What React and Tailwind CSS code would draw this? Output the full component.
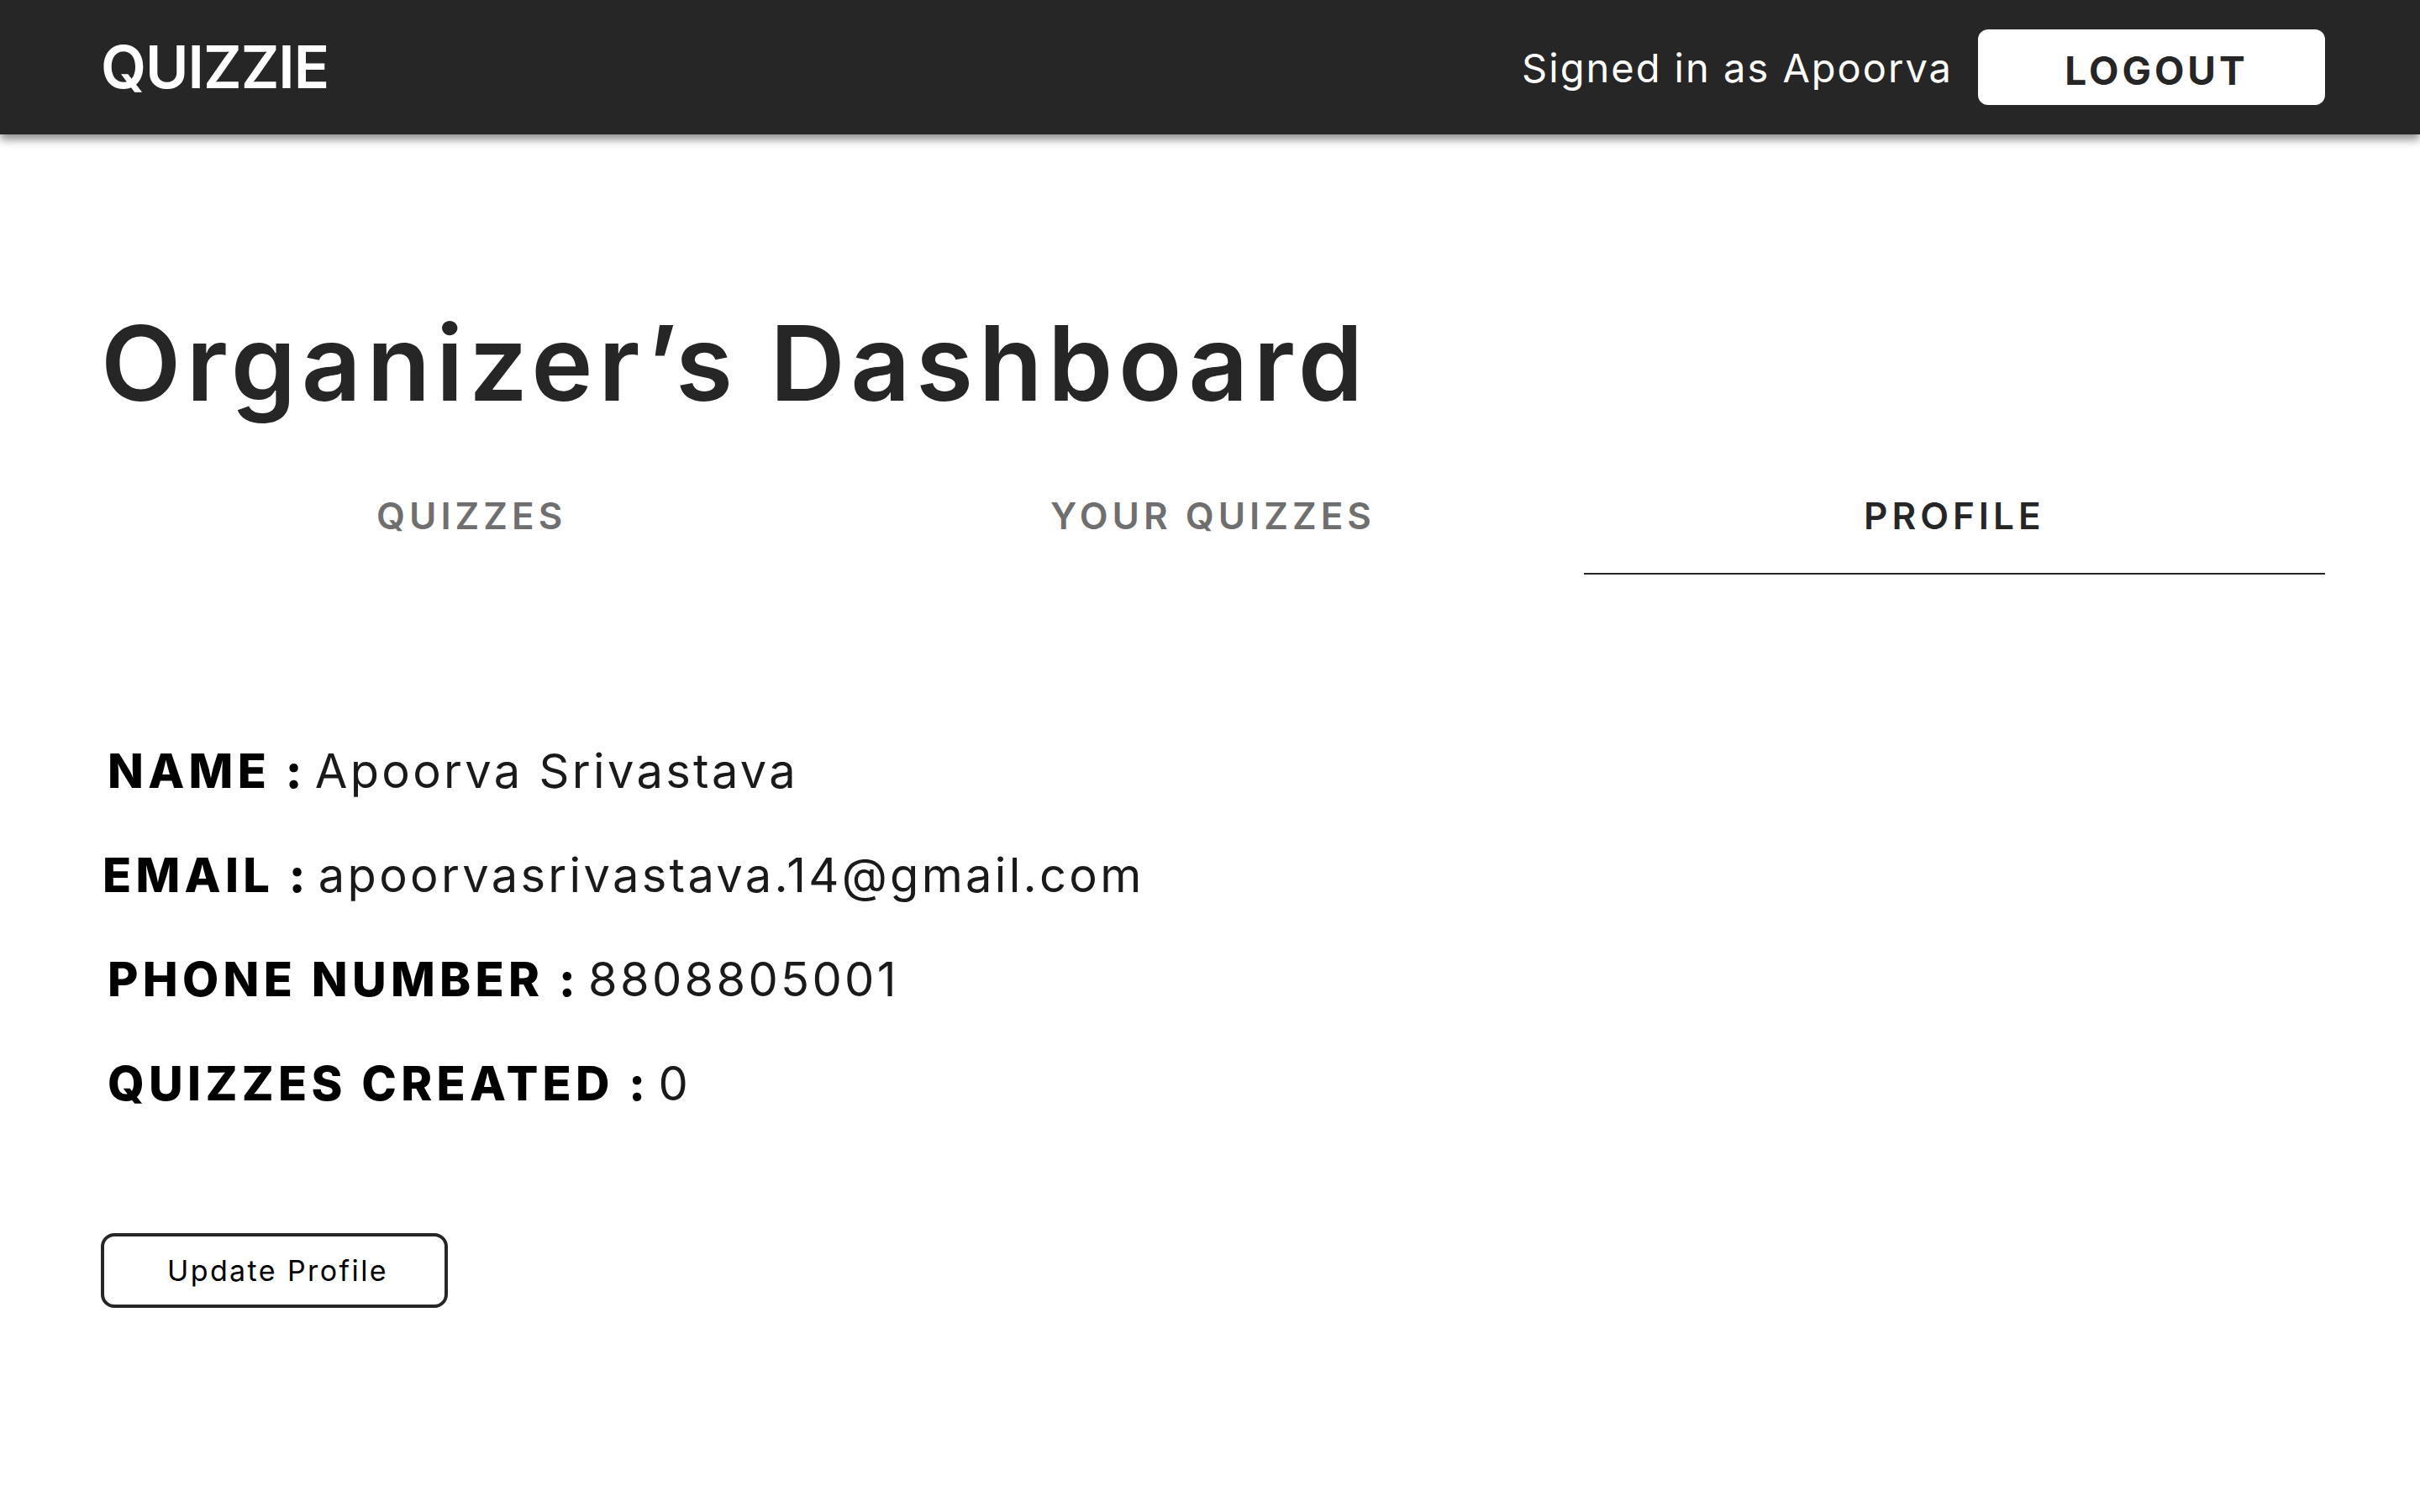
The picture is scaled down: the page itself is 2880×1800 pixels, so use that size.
import React from 'react';

const FONT = { fontFamily: 'Inter, "Open Sans", "DejaVu Sans", sans-serif' };

const tabs = [
    { id: 'quizzes', label: 'QUIZZES' },
    { id: 'yours', label: 'YOUR QUIZZES' },
    { id: 'profile', label: 'PROFILE' },
];

const fields = [
    { label: 'NAME :', value: 'Apoorva Srivastava', shift: '' },
    { label: 'EMAIL :', value: 'apoorvasrivastava.14@gmail.com', shift: '-ml-[6px]' },
    { label: 'PHONE NUMBER :', value: '8808805001', shift: '' },
    { label: 'QUIZZES CREATED :', value: '0', shift: '' },
];

function Header() {
    return (
        <header className="h-[160px] bg-[#262626] pl-[120px] pr-[113px] flex items-center justify-between shadow-[0_6px_10px_rgba(0,0,0,0.45)] relative z-10">
            <div className="text-white text-[70px] font-semibold leading-none tracking-[-1px]">QUIZZIE</div>
            <div className="flex items-center gap-[30px]">
                <span className="text-white text-[47px] leading-none tracking-[2px]">Signed in as Apoorva</span>
                <button className="w-[413px] h-[90px] pt-[8px] pl-[12px] rounded-[12px] bg-white text-[#262626] text-[46px] font-bold leading-none tracking-[4px]">
                    LOGOUT
                </button>
            </div>
        </header>
    );
}

export default function App() {
    const active = 'profile';

    return (
        <div className="min-h-screen bg-white text-[#262626]" style={FONT}>
            <Header />

            <main className="pl-[120px] pr-[113px]">
                {/* Title */}
                <h1 className="mt-[210px] text-[124px] font-semibold leading-none tracking-[6.5px]">
                    Organizer’s Dashboard
                </h1>

                {/* Tabs */}
                <div className="mt-[98px] flex">
                    {tabs.map(t => (
                        <div
                            key={t.id}
                            className={`flex-1 text-center text-[44px] font-semibold leading-none tracking-[5px] pb-[46px] border-b-2 ${t.id === active ? 'border-[#262626] text-[#262626]' : 'border-transparent text-[#6f6f6f]'}`}
                        >
                            {t.label}
                        </div>
                    ))}
                </div>

                {/* Profile details */}
                <div className="mt-[206px] pl-[8px] flex flex-col gap-[68px] text-[56px] leading-none text-black">
                    {fields.map(f => (
                        <div key={f.label} className={f.shift}>
                            <span className="font-extrabold tracking-[5.3px]">{f.label}</span>
                            <span className="font-normal tracking-[3.3px] text-[#1a1a1a] ml-[10px]">{f.value}</span>
                        </div>
                    ))}
                </div>

                <button className="mt-[150px] w-[413px] h-[89px] pl-[8px] rounded-[16px] border-4 border-[#262626] text-[34px] leading-none tracking-[2.4px] text-black">
                    Update Profile
                </button>
            </main>
        </div>
    );
}
